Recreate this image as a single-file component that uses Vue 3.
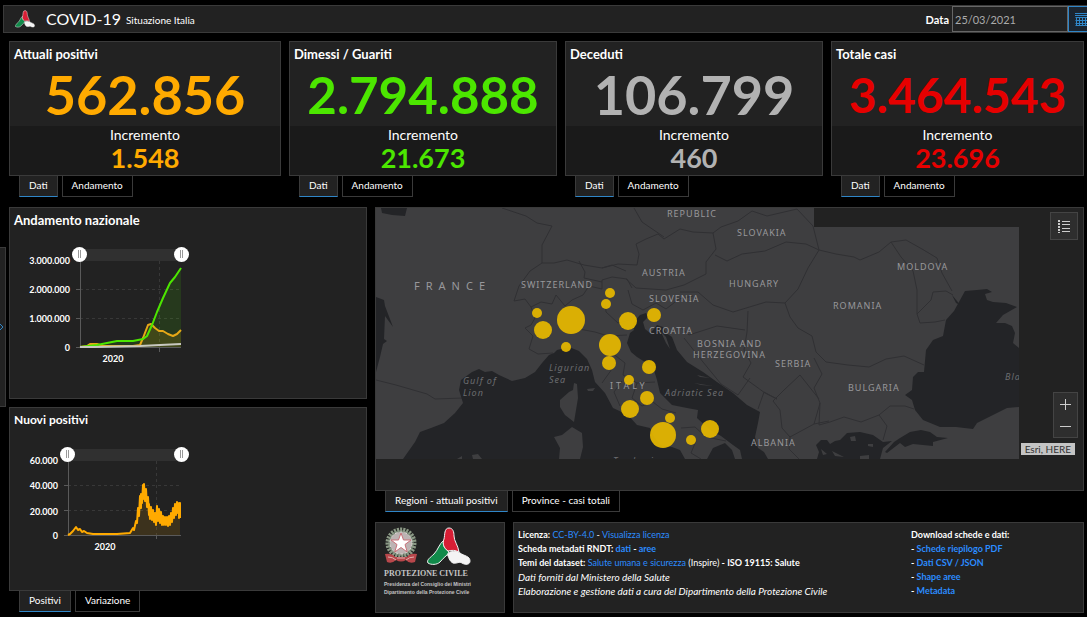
<template>
  <div class="dashboard">
    <header class="topbar">
      <svg class="topbar-logo" viewBox="0 0 44 39" aria-hidden="true">
        <path v-for="lobe in lobes" :key="lobe.fill" :d="lobe.d" :fill="lobe.fill" class="lobe" />
      </svg>
      <h1>COVID-19</h1>
      <span class="subtitle">Situazione Italia</span>
      <label for="date" class="date-label">Data</label>
      <input id="date" v-model="date" class="date-input" type="text" />
      <button type="button" class="calendar" aria-label="Calendario">
        <svg width="15" height="13" viewBox="0 0 15 13" fill="none" stroke="currentColor">
          <path d="M0 2.5H15M0 .5H15M.5 4.5H15M.5 7.5H15M.5 10.5H15M.5 12.5H15M1.5 4V13M4.5 4V13M7.5 4V13M10.5 4V13M13.5 4V13" />
        </svg>
      </button>
    </header>

    <button type="button" class="drawer" aria-label="Apri pannello">
      <svg width="4" height="8" viewBox="0 0 4 8" fill="none" stroke="currentColor">
        <path d="M0 1L3 4L0 7" />
      </svg>
    </button>

    <main>
      <div class="cards">
        <section v-for="card in cards" :key="card.title">
          <div class="panel card">
            <div class="card-main">
              <h2>{{ card.title }}</h2>
              <p class="total" :class="card.tone">{{ card.total }}</p>
            </div>
            <div class="card-delta">
              <p>Incremento</p>
              <p class="delta" :class="card.tone">{{ card.delta }}</p>
            </div>
          </div>
          <div class="tabs">
            <button
              v-for="tab in ['Dati', 'Andamento']"
              :key="tab"
              type="button"
              :class="{ active: card.tab === tab }"
              @click="card.tab = tab"
            >{{ tab }}</button>
          </div>
        </section>
      </div>

      <div class="body">
        <div class="left">
          <section class="panel national">
            <h2>Andamento nazionale</h2>
            <div class="chart chart-national">
              <div class="scrollbar">
                <button v-for="h in 2" :key="h" type="button" class="handle" aria-label="Intervallo"></button>
              </div>
              <svg width="101" height="86" viewBox="0 0 101 86">
                <path class="grid" d="M0 28.5H101M0 57.5H101M79.5 0V86" />
                <path class="axis" d="M.5 0V86M-4 28.5H0M-4 57.5H0M-4 86.5H101M79.5 86V91" />
                <path class="area green" :d="area(recovered, 86)" />
                <path class="area orange" :d="area(positives, 86)" />
                <path class="line orange" :d="line(positives)" />
                <path class="line green" :d="line(recovered)" />
                <path class="line grey" :d="line(deaths)" />
                <text class="tick" x="-10" y="3">3.000.000</text>
                <text class="tick" x="-10" y="32">2.000.000</text>
                <text class="tick" x="-10" y="61">1.000.000</text>
                <text class="tick" x="-10" y="90">0</text>
                <text class="tick year" x="33" y="101">2020</text>
              </svg>
            </div>
          </section>

          <section>
            <div class="panel daily">
              <h2>Nuovi positivi</h2>
              <div class="chart chart-daily">
                <div class="scrollbar">
                  <button v-for="h in 2" :key="h" type="button" class="handle" aria-label="Intervallo"></button>
                </div>
                <svg width="113" height="74" viewBox="0 0 113 74">
                  <path class="grid" d="M0 24.5H113M0 49.5H113M88.5 0V74" />
                  <path class="axis" d="M.5 0V74M-4 24.5H0M-4 49.5H0M-4 74.5H113M88.5 74V78" />
                  <path class="area orange" :d="area(daily, 74)" />
                  <path class="line orange thick" :d="line(daily)" />
                  <text class="tick" x="-10" y="3">60.000</text>
                  <text class="tick" x="-10" y="28">40.000</text>
                  <text class="tick" x="-10" y="54">20.000</text>
                  <text class="tick" x="-10" y="78">0</text>
                  <text class="tick year" x="37" y="89">2020</text>
                </svg>
              </div>
            </div>
            <div class="tabs">
              <button
                v-for="tab in ['Positivi', 'Variazione']"
                :key="tab"
                type="button"
                :class="{ active: dailyTab === tab }"
                @click="dailyTab = tab"
              >{{ tab }}</button>
            </div>
          </section>
        </div>

        <div class="right">
          <section>
            <div class="panel map">
              <svg class="basemap" width="643" height="251" viewBox="0 0 643 251">
                <path class="land" d="M0 0H438V19H643V251H0Z" />
                <path v-for="(d, i) in borders" :key="'b' + i" class="border" :d="d" />
                <path v-for="(d, i) in seas" :key="'s' + i" class="sea" :d="d" />
                <path v-for="(d, i) in islands" :key="'i' + i" class="land" :d="d" />
                <text
                  v-for="l in labels"
                  :key="l.text"
                  :x="l.x"
                  :y="l.y"
                  class="place"
                  :class="l.kind"
                >{{ l.text }}</text>
                <circle v-for="(r, i) in regions" :key="'r' + i" class="region" :cx="r[0]" :cy="r[1]" :r="r[2]" />
              </svg>
              <button type="button" class="legend" aria-label="Legenda">
                <svg width="13" height="13" viewBox="0 0 13 13" fill="none" stroke="currentColor">
                  <path d="M4 1.5H12M4 4.500H12M4 8.500H12M4 11.500H12" />
                  <path d="M1 0V13" stroke-width="2" stroke-dasharray="2 1" />
                </svg>
              </button>
              <div class="zoom">
                <button type="button" aria-label="Ingrandisci">
                  <svg width="11" height="11" viewBox="0 0 11 11" stroke="currentColor"><path d="M0 5.5H11M5.5 0V11" /></svg>
                </button>
                <button type="button" aria-label="Riduci">
                  <svg width="11" height="11" viewBox="0 0 11 11" stroke="currentColor"><path d="M0 5.5H11" /></svg>
                </button>
              </div>
              <span class="attribution">Esri, HERE</span>
            </div>
            <div class="tabs">
              <button
                v-for="tab in ['Regioni - attuali positivi', 'Province - casi totali']"
                :key="tab"
                type="button"
                :class="{ active: mapTab === tab }"
                @click="mapTab = tab"
              >{{ tab }}</button>
            </div>
          </section>

          <footer>
            <div class="panel brand">
              <div class="brand-marks">
                <svg width="34" height="38" viewBox="0 0 34 38" aria-hidden="true">
                  <circle cx="17" cy="16" r="13" class="wreath" />
                  <circle cx="17" cy="16" r="11" class="gear" />
                  <path d="M17 6L19.500 13H27L21 17.500L23.200 25L17 20.500L10.800 25L13 17.500L7 13H14.500Z" class="star" />
                  <path d="M1 27Q8 26 11 30H23Q26 26 33 27L31 35Q25 37 22 33Q17 36 12 33Q8 37 3 35Z" class="ribbon" />
                  <path d="M4 30Q9 30 12 33M30 30Q25 30 22 33M13 31H21" class="ribbon-fold" />
                </svg>
                <svg width="44" height="39" viewBox="0 0 44 39" aria-hidden="true">
                  <path v-for="lobe in lobes" :key="lobe.fill" :d="lobe.d" :fill="lobe.fill" class="lobe" />
                </svg>
              </div>
              <p class="brand-name">PROTEZIONE CIVILE</p>
              <p class="brand-sub">Presidenza del Consiglio dei Ministri</p>
              <p class="brand-sub">Dipartimento della Protezione Civile</p>
            </div>

            <div class="panel info">
              <div>
                <p><b>Licenza:</b> <a href="#">CC-BY-4.0</a> - <a href="#">Visualizza licenza</a></p>
                <p><b>Scheda metadati RNDT: <a href="#">dati</a> - <a href="#">aree</a></b></p>
                <p><b>Temi del dataset:</b> <a href="#">Salute umana e sicurezza</a> (Inspire) <b>- ISO 19115: Salute</b></p>
                <p class="note">Dati forniti dal Ministero della Salute</p>
                <p class="note">Elaborazione e gestione dati a cura del Dipartimento della Protezione Civile</p>
              </div>
              <div class="downloads">
                <p>Download schede e dati:</p>
                <p v-for="d in downloads" :key="d">- <a href="#">{{ d }}</a></p>
              </div>
            </div>
          </footer>
        </div>
      </div>
    </main>
  </div>
</template>

<script setup>
import { ref } from 'vue'

const date = ref('25/03/2021')
const dailyTab = ref('Positivi')
const mapTab = ref('Regioni - attuali positivi')

const cards = ref([
  { title: 'Attuali positivi', total: '562.856', delta: '1.548', tone: 'amber', tab: 'Dati' },
  { title: 'Dimessi / Guariti', total: '2.794.888', delta: '21.673', tone: 'lime', tab: 'Dati' },
  { title: 'Deceduti', total: '106.799', delta: '460', tone: 'silver', tab: 'Dati' },
  { title: 'Totale casi', total: '3.464.543', delta: '23.696', tone: 'red', tab: 'Dati' }
])

const downloads = ['Schede riepilogo PDF', 'Dati CSV / JSON', 'Shape aree', 'Metadata']

const lobes = [
  { fill: '#f4f4f4', d: 'M20 27C23 24 29 23 33 26C37 29 43 29 43 34C43 38 38 38 35 36C32 34 30 37 26 36C22 34 22 30 20 27Z' },
  { fill: '#118a4a', d: 'M17 13C15 18 18 22 22 25C20 29 16 31 13 35C10 38 4 38 1 36C-1 33 4 30 7 27C11 23 12 17 17 13Z' },
  { fill: '#d81e35', d: 'M22 1C26 1 27 5 27 9C27 14 31 18 32 25C28 23 25 23 21 24C17 21 15 17 17 12C18 8 17 1 22 1Z' }
]

// chart series, in plot coordinates
const recovered = [[0, 86], [17, 84], [27, 82], [37, 80], [53, 80], [63, 78], [67, 75], [72, 64], [77, 51], [83, 37], [90, 22], [95, 16], [101, 7]]
const positives = [[0, 86], [7, 85], [10, 83], [17, 83], [23, 85], [53, 85], [60, 84], [63, 77], [68, 64], [71, 63], [75, 67], [79, 70], [83, 70], [88, 73], [93, 75], [97, 73], [101, 69]]
const deaths = [[0, 86], [15, 86], [60, 85], [80, 84], [101, 83]]
const daily = [
  [0, 74], [2, 73], [5, 70], [8, 66], [10, 69], [12, 68], [14, 71], [16, 70], [19, 72], [25, 73], [49, 73], [62, 72],
  [65, 67], [66, 69], [68, 60], [69, 62], [70, 47], [71, 55], [72, 35], [73, 47], [73, 33], [74, 42], [75, 24], [76, 38],
  [76, 23], [77, 40], [78, 28], [79, 46], [80, 36], [81, 54], [81, 43], [82, 58], [83, 46], [84, 59], [85, 49], [86, 61],
  [87, 52], [88, 64], [89, 45], [90, 60], [91, 48], [92, 62], [93, 51], [94, 64], [95, 55], [96, 64], [97, 56], [98, 64],
  [99, 56], [100, 65], [101, 55], [102, 64], [103, 52], [104, 61], [105, 47], [106, 57], [107, 43], [108, 54], [109, 41],
  [110, 52], [111, 42], [111, 57], [112, 42], [112, 57]
]

function line(points) {
  return 'M' + points.map((p) => p.join(' ')).join('L')
}

function area(points, base) {
  return `${line(points)}V${base}H0Z`
}

const seas = [
  'M5 0H31L29 8L16 7L6 5Z',
  'M0 89L8 92L9 98L17 119L9 108L8 131L11 133L7 136L4 149L0 164Z',
  'M27 251L39 234L44 224L55 220L68 215L79 205L87 195L83 182L85 172L96 164L103 161L109 164L116 163L123 167L136 173L149 170L159 164L166 155L173 147L178 145L181 142L193 139L203 143L211 151L216 162L219 174L229 185L237 200L252 207L261 217L274 220L279 230L285 237L296 239L304 242L309 251Z',
  'M264 107L257 115L258 122L254 125L251 135L255 144L261 149L277 159L281 172L284 185L296 197L311 200L322 202L321 210L334 222L345 228L357 237L364 242L366 251H392L388 244L382 240L379 229L382 215L384 204L371 197L357 185L341 174L327 164L311 154L301 142L296 129L290 125L287 119L281 117L278 121L274 125L269 121L267 114L272 109L270 105Z',
  'M331 251L337 240L349 235L356 242L359 251Z',
  'M441 251L443 244L440 237L445 232L451 232L454 236L459 233L464 232L471 225L484 224L497 227L507 234L516 233L507 240L504 251Z',
  'M509 244L518 234L524 230L534 224L545 222L554 224L561 229L572 230L557 234L557 238L537 236L529 239L524 235L511 245Z',
  'M589 83L601 82L611 81L616 84L609 86L611 92L617 94L630 95L641 99L627 107L620 115L629 115L636 118L639 125L637 135L643 140V199L631 200L615 208L601 215L597 221L580 219L564 219L547 212L539 202L536 192L529 187L536 182L537 169L542 164L548 164L549 153L550 142L557 132L567 128L570 112L578 103Z',
  'M576 87L581 93L584 97L580 95Z'
]

const islands = [
  'M184 192L193 184L197 182L198 175L201 176L202 190L198 214L189 207L184 199Z',
  'M178 229L186 227L196 219L206 225L207 239L204 251H183L184 240Z',
  'M96 247L102 246L106 251H97ZM81 251L86 248V251Z',
  'M211 181L219 180L217 183L212 183Z',
  'M474 229L479 228L480 233L475 233ZM492 236L497 236V239L492 238ZM484 248L493 247V251H484ZM456 243L468 249L459 248ZM445 241L451 246L447 247Z',
  'M285 124L290 129L294 141L290 135ZM321 167L334 170L324 169ZM318 175L337 178L325 177Z'
]

const borders = [
  'M126 0L150 8L161 15L176 18L166 37L166 55L178 55L191 52L208 57L226 60L236 57L250 63',
  'M166 55L154 63L143 78L138 93L149 91L155 99L165 94L176 96L180 87L189 98L196 92L207 87L213 78L226 81L226 72L236 69L251 71L256 80',
  'M203 53L209 64L208 70L226 74',
  'M155 99L159 110L155 117L149 120L157 128L153 141L162 146L177 145',
  'M226 60L242 56L261 57L263 46L260 36L270 31L282 26L288 31L304 21L317 24L337 25L340 41L330 54L330 66L308 77L290 82L260 80L250 71',
  'M258 0L266 14L288 29',
  'M337 25L345 19L362 13L376 3L391 8L421 1L437 18L443 42L430 36L410 34L389 43L366 46L351 53L339 47',
  'M443 42L432 60L422 81L409 95L390 94L357 104L337 97L322 84L304 84',
  'M443 42L460 46L478 49L484 52L503 44L515 34L530 32L546 41L561 50L566 65L576 83',
  'M515 34L525 49L537 63L541 82L541 106L544 115L559 114L569 112M541 106L555 92L557 84L570 83L577 87',
  'M409 95L414 109L422 120L436 128L440 144L450 154L472 157L493 159L510 151L528 148L548 157',
  'M438 150L446 166L438 180L444 195L438 216L414 229L406 220L404 202L397 193L408 182L424 167L443 191',
  'M372 103L371 124L368 142L375 155L367 169L389 185L401 191L388 184L382 201',
  'M304 119L313 127L341 118L369 122M308 130L327 154L345 176L362 187L374 170',
  'M444 195L443 217L454 214L468 209L485 214L503 207L514 198L529 198L538 201M503 207L511 218L507 232',
  'M414 229L413 241L423 251M438 216L453 213',
  'M252 82L256 96L267 102L280 95L290 101L303 91L317 88',
  'M229 92L230 104L242 115L254 112M203 121L219 124L232 128L251 127',
  'M231 141L249 155L247 167L261 175L279 174M261 175L256 190L266 198L277 194L286 201L300 205',
  'M305 220L319 219L330 229L350 233M320 233L315 245L325 251M226 175L236 161M244 198L238 184L246 173',
  'M0 172L20 177L51 186L59 191L87 190'
]

const labels = [
  { text: 'FRANCE', x: 38, y: 82, kind: 'country' },
  { text: 'SWITZERLAND', x: 145, y: 80 },
  { text: 'REPUBLIC', x: 291, y: 9 },
  { text: 'SLOVAKIA', x: 361, y: 28 },
  { text: 'AUSTRIA', x: 266, y: 68 },
  { text: 'HUNGARY', x: 353, y: 79 },
  { text: 'SLOVENIA', x: 273, y: 94 },
  { text: 'CROATIA', x: 273, y: 126 },
  { text: 'BOSNIA AND', x: 321, y: 139 },
  { text: 'HERZEGOVINA', x: 317, y: 150 },
  { text: 'SERBIA', x: 399, y: 159 },
  { text: 'ITALY', x: 234, y: 181, kind: 'wide' },
  { text: 'ALBANIA', x: 375, y: 238 },
  { text: 'BULGARIA', x: 472, y: 183 },
  { text: 'ROMANIA', x: 457, y: 101 },
  { text: 'MOLDOVA', x: 521, y: 62 },
  { text: 'Ligurian', x: 173, y: 163, kind: 'water' },
  { text: 'Sea', x: 173, y: 175, kind: 'water' },
  { text: 'Gulf of', x: 87, y: 176, kind: 'water' },
  { text: 'Lion', x: 87, y: 188, kind: 'water' },
  { text: 'Adriatic Sea', x: 289, y: 188, kind: 'water' },
  { text: 'Tyrrhenian', x: 237, y: 256, kind: 'water' },
  { text: 'Black Sea', x: 629, y: 172, kind: 'water' }
]

const regions = [
  [161, 105, 5], [167, 122, 9], [195, 112, 14], [190, 139, 5], [234, 85, 5], [230, 96, 5], [252, 113, 9],
  [278, 107, 7], [234, 137, 11], [233, 155, 7], [273, 159, 7], [253, 172, 5], [271, 190, 7], [254, 201, 9],
  [294, 210, 5], [287, 227, 13], [315, 232, 5], [334, 221, 9]
]
</script>

<style>
body {
  margin: 0;
  background: #000;
}
</style>

<style scoped>
.dashboard {
  position: relative;
  padding-top: 5px;
  overflow: hidden;
  color: #fff;
  font-family: Lato, 'Open Sans', sans-serif;
  font-size: 10px;
}

h1,
h2,
p {
  margin: 0;
}

button {
  padding: 0;
  border: 0;
  font-family: inherit;
  color: inherit;
  cursor: pointer;
}

svg {
  display: block;
}

.topbar {
  display: flex;
  align-items: center;
  box-sizing: border-box;
  height: 28px;
  margin-left: 3px;
  padding-left: 11px;
  background: #222;
  border: 1px solid #3a3a3a;
  border-right: 0;
  overflow: hidden;
}

.topbar-logo {
  width: 20px;
  height: 18px;
}

.lobe {
  stroke: #f4f4f4;
  stroke-width: 1px;
}

h1 {
  margin-left: 11px;
  padding-bottom: 2px;
  font-size: 16px;
  font-weight: 400;
}

.subtitle {
  margin-left: 5px;
  padding-top: 2px;
  font-size: 10px;
}

.date-label {
  margin-left: auto;
  font-size: 11px;
  font-weight: 700;
}

.date-input {
  box-sizing: border-box;
  width: 116px;
  height: 26px;
  margin-left: 3px;
  padding: 0 2px;
  background: #222;
  border: 1px solid #666;
  color: #aaa;
  font-family: inherit;
  font-size: 11px;
}

.calendar {
  display: flex;
  align-items: center;
  flex: none;
  box-sizing: border-box;
  width: 27px;
  height: 26px;
  margin-right: -8px;
  padding-left: 6px;
  background: #1b2530;
  border: 1px solid #2f86c8;
  color: #2f86c8;
}

.drawer {
  position: absolute;
  top: 247px;
  left: 0;
  display: flex;
  align-items: center;
  box-sizing: border-box;
  width: 6px;
  height: 160px;
  background: #222;
  border: 1px solid #3a3a3a;
  border-left: 0;
  color: #2f86c8;
}

main {
  padding: 8px 3px 4px 9px;
}

.panel {
  box-sizing: border-box;
  background: #222;
  border: 1px solid #3a3a3a;
}

h2 {
  font-size: 13px;
  font-weight: 700;
  line-height: 16px;
}

.cards {
  display: grid;
  grid-template-columns: 272fr 268fr 258fr 253fr;
  gap: 8px;
}

.card {
  height: 135px;
}

.card-main {
  height: 84px;
  padding: 4px 4px 0;
  box-sizing: border-box;
}

.card-delta {
  height: 49px;
  background: #1a1a1a;
  text-align: center;
  font-size: 14px;
  line-height: 17px;
}

.total {
  font-size: 54px;
  font-weight: 700;
  line-height: 66px;
  text-align: center;
}

.total.lime {
  font-size: 51px;
}

.total.red {
  font-size: 48px;
}

.delta {
  font-size: 27px;
  font-weight: 700;
  line-height: 30px;
}

.amber {
  color: #ffaa00;
}

.lime {
  color: #4ce600;
}

.silver {
  color: #b2b2b2;
}

.red {
  color: #e60000;
}

.tabs {
  display: flex;
  gap: 4px;
  padding-left: 10px;
}

.tabs button {
  box-sizing: border-box;
  height: 21px;
  padding: 0 9px 2px;
  background: #000;
  border: 1px solid #3a3a3a;
  border-top: 0;
  font-size: 10px;
  line-height: 18px;
}

.tabs .active {
  background: #222;
  border-bottom-color: #2f86c8;
}

.body {
  display: grid;
  grid-template-columns: 358fr 709fr;
  gap: 8px;
  margin-top: 10px;
}

.left,
.right {
  display: flex;
  flex-direction: column;
  min-width: 0;
}

.left {
  gap: 8px;
}

.right {
  gap: 10px;
}

.national,
.daily {
  padding: 4px;
}

.national {
  height: 192px;
}

.daily {
  height: 184px;
}

.daily h2 {
  font-size: 12px;
}

.chart {
  margin-top: 21px;
}

.chart-national {
  width: 101px;
  margin-left: 66px;
}

.chart-daily {
  width: 113px;
  margin-left: 54px;
}

.scrollbar {
  display: flex;
  justify-content: space-between;
  align-items: center;
  height: 12px;
  background: #303030;
}

.handle {
  display: flex;
  justify-content: center;
  align-items: center;
  flex: none;
  width: 15px;
  height: 15px;
  margin: 0 -8px 2px;
  background: #fff;
  border-radius: 50%;
  z-index: 1;
}

.handle::before {
  content: '';
  width: 1px;
  height: 8px;
  border: solid #999;
  border-width: 0 1px;
}

.chart svg {
  overflow: visible;
}

.grid {
  fill: none;
  stroke: #383838;
  stroke-dasharray: 3 3;
}

.axis {
  fill: none;
  stroke: #5a5a5a;
}

.line {
  fill: none;
  stroke-width: 2px;
  stroke-linejoin: round;
}

.line.green {
  stroke: #4ce600;
}

.line.orange {
  stroke: #e6a817;
}

.line.thick {
  stroke: #ffaa00;
}

.line.grey {
  stroke: #c8c8c0;
}

.area {
  fill-opacity: 0.12;
}

.area.green {
  fill: #4ce600;
}

.area.orange {
  fill: #ffaa00;
}

.tick {
  fill: #fff;
  font-size: 9px;
  font-weight: 700;
  text-anchor: end;
}

.tick.year {
  text-anchor: middle;
}

.map {
  position: relative;
  height: 284px;
  overflow: hidden;
}

.land {
  fill: #3e3e40;
}

.sea {
  fill: #232427;
}

.border {
  fill: none;
  stroke: #303033;
}

.place {
  fill: #98989b;
  font-family: 'Noto Sans', sans-serif;
  font-size: 9px;
  letter-spacing: 1px;
}

.place.country {
  font-size: 11px;
  letter-spacing: 6px;
}

.place.wide {
  letter-spacing: 3px;
}

.place.water {
  fill: #6c6d70;
  font-style: italic;
}

.region {
  fill: #e6b800;
  fill-opacity: 0.93;
}

.legend,
.zoom {
  position: absolute;
  box-sizing: border-box;
  background: #2e2e2e;
  border: 1px solid #444;
  color: #ccc;
}

.legend {
  top: 4px;
  right: 5px;
  display: flex;
  align-items: center;
  justify-content: center;
  width: 28px;
  height: 28px;
}

.zoom {
  top: 184px;
  right: 5px;
  width: 25px;
}

.zoom button {
  display: flex;
  align-items: center;
  justify-content: center;
  width: 23px;
  height: 22px;
  background: none;
}

.attribution {
  position: absolute;
  top: 235px;
  right: 8px;
  padding: 0 4px;
  background: #c4c4c4;
  color: #333;
  font-size: 10px;
  line-height: 12px;
}

footer {
  display: grid;
  grid-template-columns: 130px 1fr;
  gap: 8px;
}

.brand {
  height: 91px;
  padding: 4px 8px;
  color: #c4c4c4;
}

.brand-marks {
  display: flex;
  gap: 9px;
}

.wreath {
  fill: #5f6f5f;
  stroke: #8c9a86;
  stroke-width: 5px;
  stroke-dasharray: 2 1;
}

.gear {
  fill: #bdb3b3;
  stroke: #d8d4d0;
  stroke-dasharray: 3 2;
}

.star {
  fill: #fff;
  stroke: #c87078;
}

.ribbon {
  fill: #b8474b;
}

.ribbon-fold {
  fill: none;
  stroke: #e2b0ae;
}

.brand-name {
  padding-top: 2px;
  font-family: 'Liberation Serif', serif;
  font-size: 8px;
  font-weight: 700;
  line-height: 12px;
  white-space: nowrap;
}

.brand-sub {
  font-family: 'Liberation Sans', sans-serif;
  font-size: 5px;
  font-weight: 700;
  line-height: 8px;
  white-space: nowrap;
}

.info {
  display: flex;
  justify-content: space-between;
  padding: 5px 4px;
  font-size: 9px;
  line-height: 14px;
  white-space: nowrap;
}

.info a {
  color: #2b8cff;
  text-decoration: none;
}

.note {
  font-size: 10px;
  font-style: italic;
}

.downloads {
  width: 168px;
  font-weight: 700;
}
</style>
